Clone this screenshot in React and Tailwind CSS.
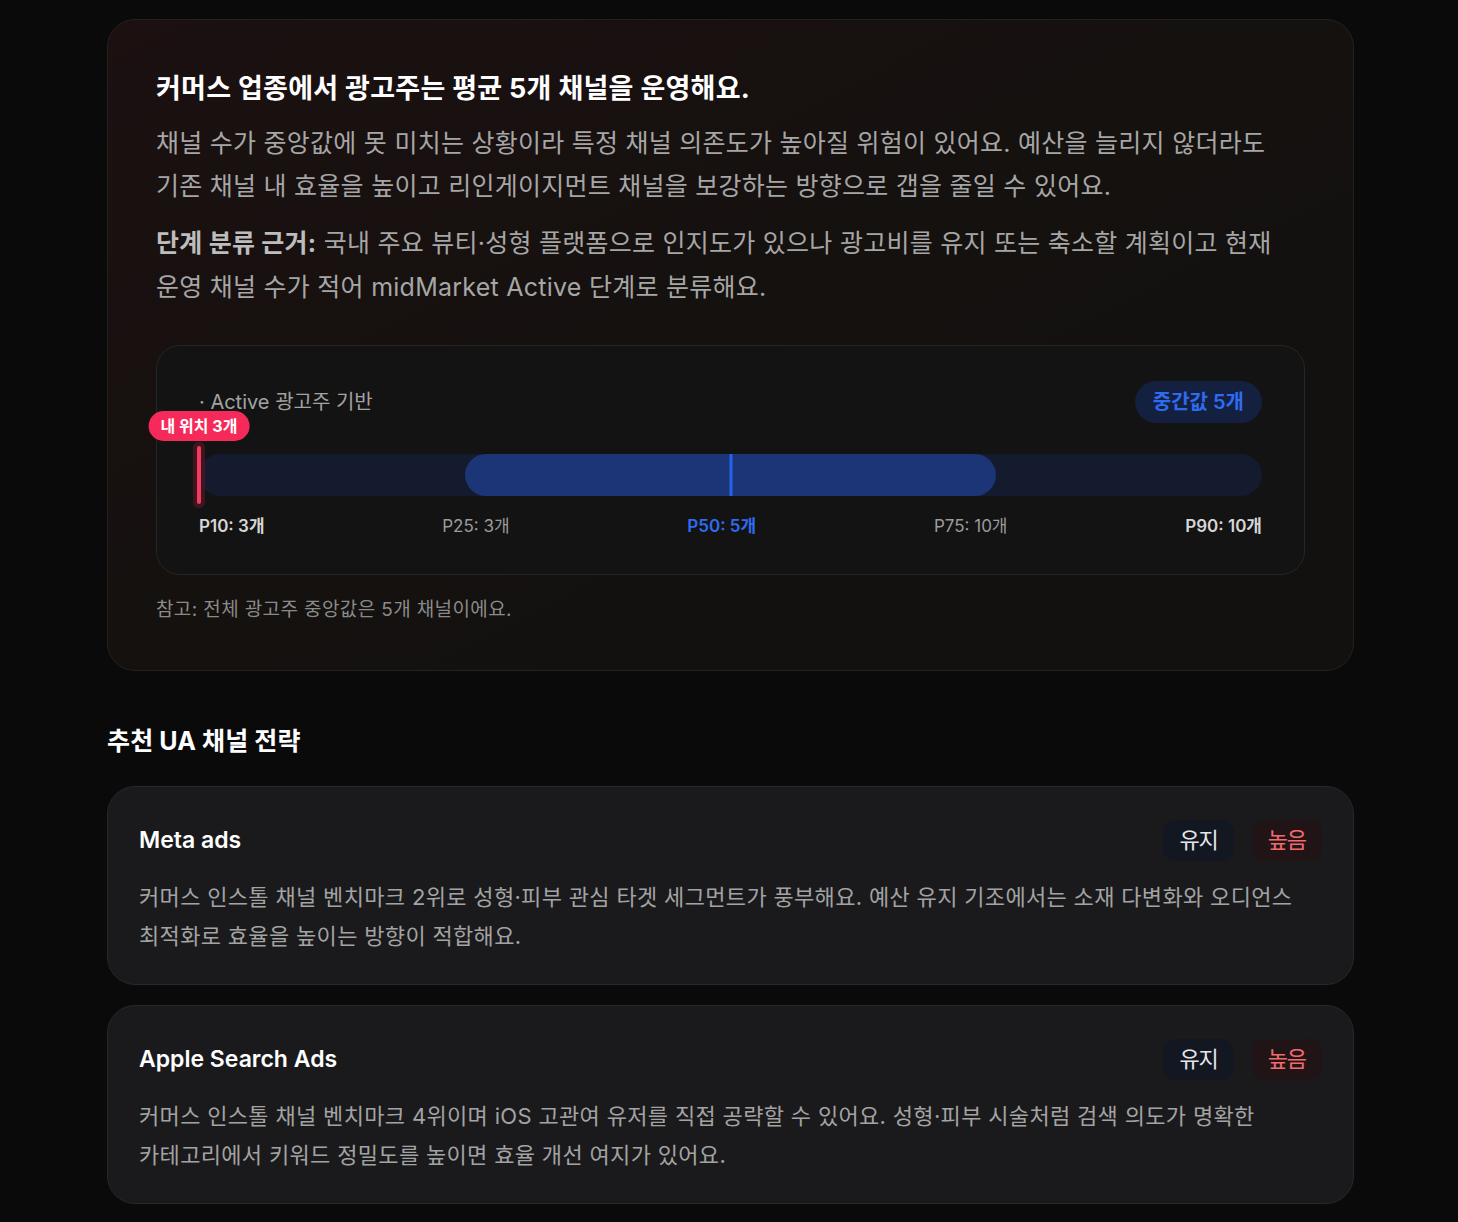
const percentiles = [
  { label: 'P10: 3개', tone: 'edge' },
  { label: 'P25: 3개', tone: 'mid' },
  { label: 'P50: 5개', tone: 'median' },
  { label: 'P75: 10개', tone: 'mid' },
  { label: 'P90: 10개', tone: 'edge' },
];

const channels = [
  {
    name: 'Meta ads',
    lines: [
      '커머스 인스톨 채널 벤치마크 2위로 성형·피부 관심 타겟 세그먼트가 풍부해요. 예산 유지 기조에서는 소재 다변화와 오디언스',
      '최적화로 효율을 높이는 방향이 적합해요.',
    ],
  },
  {
    name: 'Apple Search Ads',
    lines: [
      '커머스 인스톨 채널 벤치마크 4위이며 iOS 고관여 유저를 직접 공략할 수 있어요. 성형·피부 시술처럼 검색 의도가 명확한',
      '카테고리에서 키워드 정밀도를 높이면 효율 개선 여지가 있어요.',
    ],
  },
];

const labelClass = {
  edge: 'font-semibold text-[#d6d6d6]',
  mid: 'text-[#9b9b9b]',
  median: 'font-semibold text-[#2f6bf0]',
};

const DistributionBar = () => (
  <div className="mt-[36px] rounded-[24px] border border-[#262626] bg-[#131313] px-[42px] pt-[35px] pb-[34px]">
    <div className="flex items-center justify-between">
      <span className="text-[20px] text-[#a3a3a3]">· Active 광고주 기반</span>
      <span className="rounded-full bg-[#14203f] px-[18px] py-[6px] text-[20px] font-semibold text-[#2f6bf0]">중간값 5개</span>
    </div>

    <div className="relative mt-[31px] h-[42px] rounded-full bg-[#151b2e]">
      <div className="absolute inset-y-0 left-[25%] w-[50%] rounded-full bg-[#1c3577]" />
      <div className="absolute inset-y-0 left-1/2 w-[3px] -translate-x-1/2 bg-[#2563eb]" />
      <div className="absolute top-[-8px] bottom-[-8px] left-0 w-[4px] -translate-x-1/2 rounded-full bg-[#f43a5f] ring-[4px] ring-[#4a1622]/80" />
      <span className="absolute bottom-full left-0 mb-[13px] -translate-x-1/2 whitespace-nowrap rounded-full bg-[#f5295a] px-[12px] py-[3px] text-[16px] font-bold text-white">
        내 위치 3개
      </span>
    </div>

    <div className="mt-[18px] flex justify-between text-[17px]">
      {percentiles.map((p) => (
        <span key={p.label} className={labelClass[p.tone]}>
          {p.label}
        </span>
      ))}
    </div>
  </div>
);

const ChannelCard = ({ channel }) => (
  <div className="rounded-[28px] border border-[#28282b] bg-[#1a1a1c] px-[31px] pt-[33px] pb-[28px]">
    <div className="flex items-center justify-between">
      <h3 className="text-[23px] font-semibold text-white">{channel.name}</h3>
      <div className="flex gap-[18px]">
        <span className="rounded-xl bg-[#131722] px-[16px] py-[4px] text-[22px] tracking-[-0.05em] text-[#e5e7eb]">유지</span>
        <span className="rounded-xl bg-[#211416] px-[16px] py-[4px] text-[22px] tracking-[-0.05em] text-[#f26a6e]">높음</span>
      </div>
    </div>
    <p className="mt-[17px] text-[22px] leading-[39px] tracking-[0.015em] text-[#a3a3a3]">
      {channel.lines[0]}
      <br />
      {channel.lines[1]}
    </p>
  </div>
);

export default function App() {
  return (
    <div
      className="min-h-screen bg-[#0a0a0b] pt-[19px] pb-[19px]"
      style={{ fontFamily: '"Inter", "Noto Sans CJK KR", sans-serif' }}
    >
      <div className="ml-[107px] w-[1247px]">
        <section className="rounded-[28px] border border-[#25211f] bg-linear-to-br from-[#1c1011] via-[#14110f] to-[#121110] px-[48px] pt-[51px] pb-[46px]">
          <h2 className="text-[27px] leading-[36px] font-bold tracking-[0.01em] text-white">
            커머스 업종에서 광고주는 평균 5개 채널을 운영해요.
          </h2>
          <p className="mt-[15px] text-[25px] leading-[43px] tracking-[0.01em] text-[#a6a6a6]">
            채널 수가 중앙값에 못 미치는 상황이라 특정 채널 의존도가 높아질 위험이 있어요. 예산을 늘리지 않더라도
            <br />
            기존 채널 내 효율을 높이고 리인게이지먼트 채널을 보강하는 방향으로 갭을 줄일 수 있어요.
          </p>
          <p className="mt-[13px] text-[25px] leading-[44px] tracking-[0.01em] text-[#a6a6a6]">
            <span className="font-bold text-[#bdbdbd]">단계 분류 근거:</span> 국내 주요 뷰티·성형 플랫폼으로 인지도가 있으나 광고비를 유지 또는 축소할 계획이고 현재
            <br />
            운영 채널 수가 적어 midMarket Active 단계로 분류해요.
          </p>

          <DistributionBar />

          <p className="mt-[21px] text-[19px] tracking-[0.02em] text-[#8a8a8a]">참고: 전체 광고주 중앙값은 5개 채널이에요.</p>
        </section>

        <h2 className="mt-[52px] text-[25px] font-bold tracking-[0.005em] text-white">추천 UA 채널 전략</h2>

        <div className="mt-[25px] flex flex-col gap-[20px]">
          {channels.map((c) => (
            <ChannelCard key={c.name} channel={c} />
          ))}
        </div>
      </div>
    </div>
  );
}
